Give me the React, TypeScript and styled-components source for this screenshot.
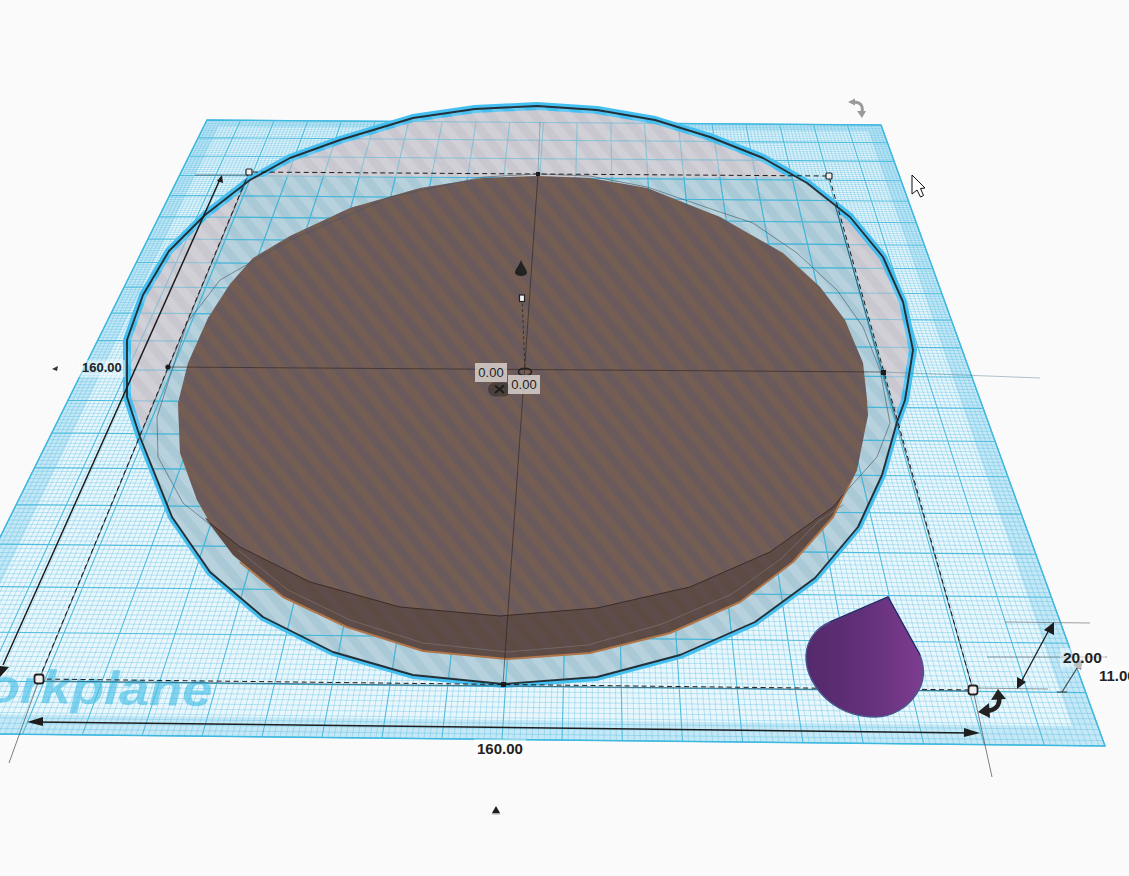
import React from "react";
import styled, { createGlobalStyle } from "styled-components";

const GlobalStyle = createGlobalStyle`
  html, body { margin: 0; padding: 0; background: #fafafa; overflow: hidden; }
`;

const Viewport = styled.div`
  position: relative;
  width: 1129px;
  height: 876px;
  overflow: hidden;
  background: #fafafa;
  font-family: "Liberation Sans", Arial, sans-serif;
`;

const Scene = styled.svg`
  display: block;
`;

const Dimension = styled.span<{ $x: number; $y: number; $size: number }>`
  position: absolute;
  left: ${(p) => p.$x}px;
  top: ${(p) => p.$y}px;
  padding: 1px 3px;
  font-size: ${(p) => p.$size}px;
  line-height: 1.15;
  font-weight: 700;
  color: #222;
  background: rgba(255, 255, 255, 0.42);
  white-space: nowrap;
`;

const AngleTag = styled.span<{ $x: number; $y: number }>`
  position: absolute;
  left: ${(p) => p.$x}px;
  top: ${(p) => p.$y}px;
  width: 32px;
  height: 19px;
  font-size: 13px;
  line-height: 19px;
  text-align: center;
  color: #1e1e1e;
  background: rgba(216, 209, 206, 0.84);
`;

// workplane corners in screen space
const quad = [
  [207, 120],
  [881, 125],
  [1105, 746],
  [-97, 733],
];

function homography() {
  const [[x0, y0], [x1, y1], [x2, y2], [x3, y3]] = quad;
  const dx1 = x1 - x2, dx2 = x3 - x2, sx = x0 - x1 + x2 - x3;
  const dy1 = y1 - y2, dy2 = y3 - y2, sy = y0 - y1 + y2 - y3;
  const det = dx1 * dy2 - dx2 * dy1;
  const g = (sx * dy2 - dx2 * sy) / det;
  const h = (dx1 * sy - sx * dy1) / det;
  return (u: number, v: number) => {
    const w = g * u + h * v + 1;
    const x = (x1 - x0 + g * x1) * u + (x3 - x0 + h * x3) * v + x0;
    const y = (y1 - y0 + g * y1) * u + (y3 - y0 + h * y3) * v + y0;
    return `${(x / w).toFixed(1)} ${(y / w).toFixed(1)}`;
  };
}

const at = homography();

function gridPath(count: number, skip: number) {
  let d = "";
  for (let i = 0; i <= count; i++) {
    if (skip && i % skip === 0) continue;
    const t = i / count;
    d += `M${at(t, 0)}L${at(t, 1)}M${at(0, t)}L${at(1, t)}`;
  }
  return d;
}

const minorLines = gridPath(200, 10);
const majorLines = gridPath(20, 0);
const planeEdge = `M${at(0, 0)}L${at(1, 0)}L${at(1, 1)}L${at(0, 1)}Z`;
const planeBand = `${planeEdge}M${at(0.022, 0.018)}L${at(0.978, 0.018)}L${at(0.978, 0.982)}L${at(0.022, 0.982)}Z`;

const outerDisc =
  "537,106 597,110 655,120 710,137 763,158 807,183 850,217 883,257 903,302 913,350 905,400 897,422 882,475 858,527 815,578 755,622 680,655 597,677 503,684 413,675 333,652 263,617 210,572 172,517 140,437 127,397 127,340 143,295 169,251 205,215 250,180 290,158 340,140 413,118 475,109";
const floorRegion = "249,177 829,177 905,440 960,690 30,690 140,437";
const innerRing =
  "217,530 183,503 158,457 157,417 187,323 220,280 290,240 390,197 483,177 538,174 590,176 647,187 720,212 753,223 797,253 837,290 863,327 880,370 890,423 877,457 843,495";
const topFace =
  "538,176 590,178 647,188 720,217 783,253 820,287 845,320 863,363 867,400 868,415 857,470 843,495 833,507 770,552 690,587 597,608 500,616 400,607 310,582 240,547 210,523 197,500 180,453 178,403 188,363 208,318 230,284 253,258 290,236 350,208 420,188 483,178";
const wallFace =
  "857,470 833,517 793,562 740,602 670,633 590,653 507,659 423,651 347,627 283,597 233,555 205,518 400,560 700,520";
const rimLine = "853,477 833,517 793,562 740,602 670,633 590,653 507,659 423,651 347,627 283,597 240,562";
const rimInner = "843,505 820,520 782,558 732,594 662,624 588,645 507,652 423,643 350,620 288,590 238,550";
const frontEdge = "843,495 833,507 770,552 690,587 597,608 500,616 400,607 310,582 240,547 210,523";

export default function App() {
  return (
    <Viewport>
      <GlobalStyle />
      <Scene width="1129" height="876" viewBox="0 0 1129 876">
        <defs>
          <pattern id="paleStripes" width="17" height="17" patternUnits="userSpaceOnUse" patternTransform="rotate(-40)">
            <rect width="8.5" height="17" fill="rgba(255,255,255,0.16)" />
          </pattern>
          <pattern id="topStripes" width="17" height="17" patternUnits="userSpaceOnUse" patternTransform="rotate(-40)">
            <rect width="8.5" height="17" fill="rgba(92,84,108,0.4)" />
          </pattern>
          <linearGradient id="dropShade" x1="0" y1="0" x2="1" y2="0">
            <stop offset="0" stopColor="#54296a" />
            <stop offset="0.5" stopColor="#62307a" />
            <stop offset="1" stopColor="#7e3c90" />
          </linearGradient>
          <clipPath id="discClip">
            <polygon points={outerDisc} />
          </clipPath>
          <clipPath id="floorClip" clipPathUnits="userSpaceOnUse">
            <polygon points={floorRegion} />
          </clipPath>
        </defs>

        {/* workplane */}
        <path d={planeEdge} fill="#e9f7fc" />
        <path d={planeBand} fillRule="evenodd" fill="rgba(100,195,230,0.28)" />
        <text
          transform="translate(212 706) rotate(1) scale(1.15 1)"
          textAnchor="end"
          fontFamily="'Liberation Sans', Arial, sans-serif"
          fontSize="47"
          fontWeight="700"
          fontStyle="italic"
          fill="#80d4ef"
        >
          Workplane
        </text>
        <path d={minorLines} fill="none" stroke="rgba(70,180,222,0.36)" strokeWidth="0.9" />
        <path d={majorLines} fill="none" stroke="#4fbcdd" strokeWidth="1.1" />
        <path d={planeEdge} fill="none" stroke="#3fb8e0" strokeWidth="1.4" />

        {/* hole cylinder */}
        <polygon points={outerDisc} fill="#c9c7cf" stroke="#45bff0" strokeWidth="8" strokeLinejoin="round" />
        <g clipPath="url(#discClip)">
          <polygon points={floorRegion} fill="#a9c9d7" />
          <polygon points={outerDisc} fill="url(#paleStripes)" />
          <path d={majorLines} fill="none" stroke="#54b8d6" strokeWidth="1.1" opacity="0.55" />
          <g clipPath="url(#floorClip)">
            <path d={majorLines} fill="none" stroke="#45b6d8" strokeWidth="1.1" />
          </g>
        </g>

        {/* solid cylinder */}
        <polygon points={wallFace} fill="#5d4a42" />
        <polygon points={wallFace} fill="url(#topStripes)" opacity="0.5" />
        <polyline points={rimInner} fill="none" stroke="rgba(120,112,112,0.75)" strokeWidth="1" />
        <polyline points={rimLine} fill="none" stroke="#b0764a" strokeWidth="2" strokeLinejoin="round" />
        <polygon points={topFace} fill="#745d52" />
        <polygon points={topFace} fill="url(#topStripes)" />
        <polyline points={frontEdge} fill="none" stroke="#3a2c28" strokeWidth="1" />
        <polyline points={innerRing} fill="none" stroke="rgba(70,85,95,0.6)" strokeWidth="1" />
        <polygon points={outerDisc} fill="none" stroke="#243038" strokeWidth="1.9" strokeLinejoin="round" />

        {/* bounding box */}
        <g fill="none">
          <path d="M39 680L247 178M973 690L835 205" stroke="rgba(30,70,90,0.75)" strokeWidth="1" />
          <path d="M38 681L973 691" stroke="rgba(30,70,90,0.7)" strokeWidth="1" />
          <path d="M39 679L249 172L829 176L973 690L39 679Z" stroke="#1d1d1d" strokeWidth="1" strokeDasharray="5 3.5" />
          <path d="M538 174L503 684M168 367L883 372" stroke="rgba(35,30,30,0.55)" strokeWidth="1" />
          <path d="M540 122L538 174M883 372L1040 378" stroke="rgba(60,110,130,0.4)" strokeWidth="1" />
          <path d="M39 680L9 763M973 690L992 777M195 175L249 175" stroke="rgba(70,75,80,0.7)" strokeWidth="1" />
          <path d="M1005 622L1090 623M987 657L1107 657M973 688L1048 689" stroke="rgba(90,95,100,0.6)" strokeWidth="1" />
          <path d="M1057 692L1067 692" stroke="#333" strokeWidth="1" />
          <path d="M522 298L525 370" stroke="#333" strokeWidth="1" strokeDasharray="3 2.5" />
        </g>

        {/* dimension arrows */}
        <path d="M221 177L3 665" stroke="#1d1d1d" strokeWidth="1.5" />
        <polygon points="222,175 217,181 223,183" fill="#1d1d1d" />
        <polygon points="0,677 9,667 -7,665" fill="#1d1d1d" />
        <path d="M36 722L972 733" stroke="#1d1d1d" strokeWidth="1.5" />
        <polygon points="27,722 43,717 43,726" fill="#1d1d1d" />
        <polygon points="980,733 964,728 964,737" fill="#1d1d1d" />
        <path d="M1050 628L1020 684" stroke="#1d1d1d" strokeWidth="1.3" />
        <polygon points="1054,622 1044,630 1054,635" fill="#1d1d1d" />
        <polygon points="1017,689 1017,677 1026,682" fill="#1d1d1d" />
        <path d="M1079 665L1062 692" stroke="#444" strokeWidth="1.2" />
        <polygon points="1083,659 1073,665 1081,670" fill="#8c8c8c" />
        <polygon points="52,369 58,366 57,371" fill="#333" />
        <polygon points="496,806 492,813 500,813" fill="#1d1d1d" />
        <rect x="492" y="813" width="8" height="1.5" fill="#aaa" />

        {/* handles */}
        <g fill="#eee" stroke="#222">
          <rect x="246" y="169" width="6" height="6" rx="1" strokeWidth="1.2" />
          <rect x="826" y="173" width="6" height="6" rx="1" strokeWidth="1.2" />
          <rect x="34.5" y="674.5" width="9" height="9" rx="2.5" strokeWidth="1.8" />
          <rect x="968.5" y="685.5" width="9" height="9" rx="2.5" strokeWidth="1.8" />
          <rect x="519.5" y="295" width="5" height="6.5" strokeWidth="1.2" fill="#f2f2f2" />
        </g>
        <g fill="#1c1c1c">
          <rect x="536" y="172" width="4" height="4" />
          <rect x="501" y="682" width="5" height="5" />
          <circle cx="168" cy="367" r="2.6" />
          <rect x="881" y="370" width="5" height="5" />
        </g>

        {/* lift cone, origin ring and x mark */}
        <path d="M521 260C519 266 515 269 515 273C516 277 526 277 527 273C527 269 523 266 521 260Z" fill="#222" />
        <ellipse cx="525" cy="372" rx="6.5" ry="3.8" fill="none" stroke="#222" strokeWidth="1.6" />
        <rect x="488" y="382.5" width="23" height="14" rx="7" fill="rgba(48,42,42,0.55)" />
        <path d="M495 385.5L504 393M504 385.5L495 393" stroke="#1c1c1c" strokeWidth="2" />

        {/* rotate handles */}
        <g fill="none">
          <path d="M853 102Q864 102 862 112" stroke="#9a9a9a" strokeWidth="3" />
          <path d="M986 711Q1001 710 999 696" stroke="#222" strokeWidth="4.5" />
        </g>
        <polygon points="848,102 855,98.5 855,105.5" fill="#9a9a9a" />
        <polygon points="862,118 857,111 866,111" fill="#9a9a9a" />
        <polygon points="998,689 1006,699 991,700" fill="#222" />
        <polygon points="978,712 989,703 990,718" fill="#222" />

        {/* cursor */}
        <path d="M912 175L912 194L917 190L920.5 197L923.5 195.5L920.5 188.5L925 188Z" fill="#fff" stroke="#111" strokeWidth="1" />

        {/* teardrop */}
        <path
          d="M888 597L830 622C816 628 807 640 806 655C805 672 815 690 830 702C843 712 860 717 875 717C893 717 908 707 917 693C925 681 925 668 920 655Z"
          fill="url(#dropShade)"
          stroke="#46598f"
          strokeWidth="1.4"
        />
        <path d="M830 622L888 597L920 655" fill="none" stroke="#2c2560" strokeWidth="1.2" />
      </Scene>

      <Dimension $x={79} $y={360} $size={13}>160.00</Dimension>
      <Dimension $x={474} $y={739} $size={15}>160.00</Dimension>
      <Dimension $x={1060} $y={648} $size={15.5}>20.00</Dimension>
      <Dimension $x={1096} $y={666} $size={15}>11.00</Dimension>
      <AngleTag $x={475} $y={363}>0.00</AngleTag>
      <AngleTag $x={508} $y={375}>0.00</AngleTag>
    </Viewport>
  );
}
